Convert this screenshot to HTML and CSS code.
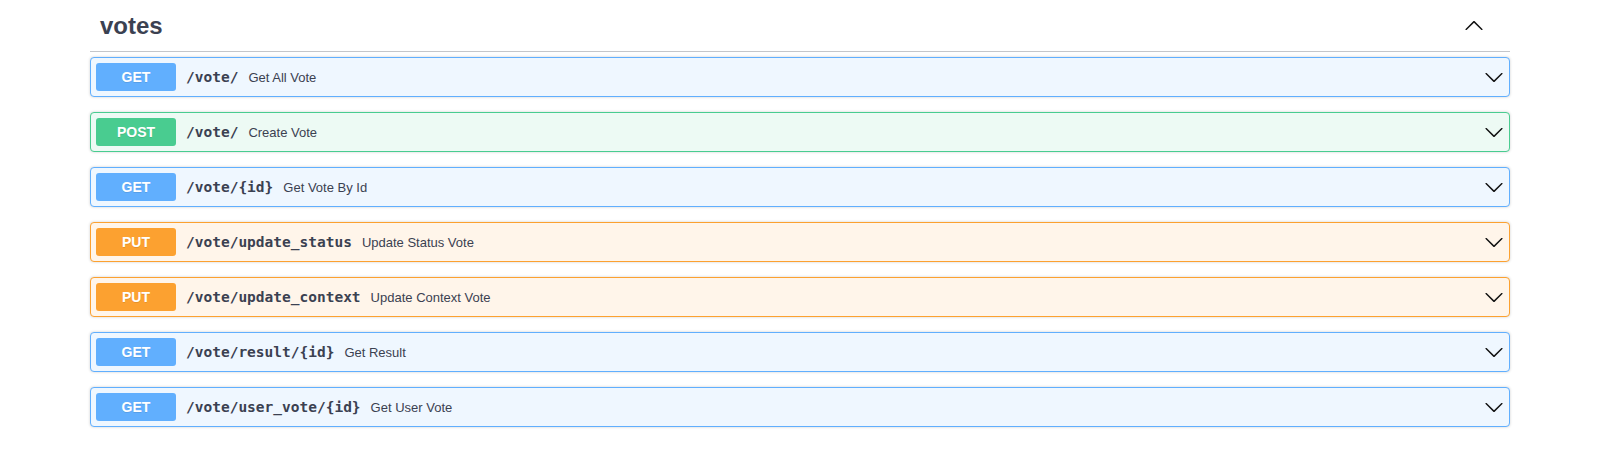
FILE: index.html
```html
<!DOCTYPE html>
<html>
<head>
<meta charset="utf-8">
<link rel="stylesheet" href="styles.css">
</head>
<body>
<div class="wrapper">
  <h3 class="tag">
    <span class="tag-name">votes</span>
    <button class="tag-toggle" aria-label="collapse">
      <svg class="arrow up" width="20" height="20" viewBox="0 0 20 20"><path d="M17.418 6.109c.272-.268.709-.268.979 0s.271.701 0 .969l-7.908 7.83c-.27.268-.707.268-.979 0l-7.908-7.83c-.27-.268-.27-.701 0-.969.271-.268.709-.268.979 0L10 13.25l7.418-7.141z"/></svg>
    </button>
  </h3>

  <div class="opblock get">
    <div class="summary">
      <span class="method">GET</span>
      <span class="path">/vote/</span>
      <span class="desc">Get All Vote</span>
      <svg class="arrow" width="20" height="20" viewBox="0 0 20 20"><path d="M17.418 6.109c.272-.268.709-.268.979 0s.271.701 0 .969l-7.908 7.83c-.27.268-.707.268-.979 0l-7.908-7.83c-.27-.268-.27-.701 0-.969.271-.268.709-.268.979 0L10 13.25l7.418-7.141z"/></svg>
    </div>
  </div>

  <div class="opblock post">
    <div class="summary">
      <span class="method">POST</span>
      <span class="path">/vote/</span>
      <span class="desc">Create Vote</span>
      <svg class="arrow" width="20" height="20" viewBox="0 0 20 20"><path d="M17.418 6.109c.272-.268.709-.268.979 0s.271.701 0 .969l-7.908 7.83c-.27.268-.707.268-.979 0l-7.908-7.83c-.27-.268-.27-.701 0-.969.271-.268.709-.268.979 0L10 13.25l7.418-7.141z"/></svg>
    </div>
  </div>

  <div class="opblock get">
    <div class="summary">
      <span class="method">GET</span>
      <span class="path">/vote/{id}</span>
      <span class="desc">Get Vote By Id</span>
      <svg class="arrow" width="20" height="20" viewBox="0 0 20 20"><path d="M17.418 6.109c.272-.268.709-.268.979 0s.271.701 0 .969l-7.908 7.83c-.27.268-.707.268-.979 0l-7.908-7.83c-.27-.268-.27-.701 0-.969.271-.268.709-.268.979 0L10 13.25l7.418-7.141z"/></svg>
    </div>
  </div>

  <div class="opblock put">
    <div class="summary">
      <span class="method">PUT</span>
      <span class="path">/vote/update_status</span>
      <span class="desc">Update Status Vote</span>
      <svg class="arrow" width="20" height="20" viewBox="0 0 20 20"><path d="M17.418 6.109c.272-.268.709-.268.979 0s.271.701 0 .969l-7.908 7.83c-.27.268-.707.268-.979 0l-7.908-7.83c-.27-.268-.27-.701 0-.969.271-.268.709-.268.979 0L10 13.25l7.418-7.141z"/></svg>
    </div>
  </div>

  <div class="opblock put">
    <div class="summary">
      <span class="method">PUT</span>
      <span class="path">/vote/update_context</span>
      <span class="desc">Update Context Vote</span>
      <svg class="arrow" width="20" height="20" viewBox="0 0 20 20"><path d="M17.418 6.109c.272-.268.709-.268.979 0s.271.701 0 .969l-7.908 7.83c-.27.268-.707.268-.979 0l-7.908-7.83c-.27-.268-.27-.701 0-.969.271-.268.709-.268.979 0L10 13.25l7.418-7.141z"/></svg>
    </div>
  </div>

  <div class="opblock get">
    <div class="summary">
      <span class="method">GET</span>
      <span class="path">/vote/result/{id}</span>
      <span class="desc">Get Result</span>
      <svg class="arrow" width="20" height="20" viewBox="0 0 20 20"><path d="M17.418 6.109c.272-.268.709-.268.979 0s.271.701 0 .969l-7.908 7.83c-.27.268-.707.268-.979 0l-7.908-7.83c-.27-.268-.27-.701 0-.969.271-.268.709-.268.979 0L10 13.25l7.418-7.141z"/></svg>
    </div>
  </div>

  <div class="opblock get">
    <div class="summary">
      <span class="method">GET</span>
      <span class="path">/vote/user_vote/{id}</span>
      <span class="desc">Get User Vote</span>
      <svg class="arrow" width="20" height="20" viewBox="0 0 20 20"><path d="M17.418 6.109c.272-.268.709-.268.979 0s.271.701 0 .969l-7.908 7.83c-.27.268-.707.268-.979 0l-7.908-7.83c-.27-.268-.27-.701 0-.969.271-.268.709-.268.979 0L10 13.25l7.418-7.141z"/></svg>
    </div>
  </div>
</div>
</body>
</html>
```

FILE: styles.css
```css
html, body {
  margin: 0;
  padding: 0;
  background: #ffffff;
}

body {
  font-family: "Liberation Sans", Arial, sans-serif;
  color: #3b4151;
}

.wrapper {
  width: 1420px;
  margin-left: 90px;
}

.tag {
  display: flex;
  align-items: center;
  margin: 0 0 5px;
  padding: 10px 20px 10px 10px;
  border-bottom: 1px solid rgba(59, 65, 81, 0.3);
  font-size: 24px;
  line-height: 31px;
  font-weight: bold;
  color: #3b4151;
}

.tag-name {
  flex: 1;
}

.tag-toggle {
  display: flex;
  align-items: center;
  border: none;
  background: none;
  padding: 0;
  margin-right: 6px;
}

.arrow {
  display: block;
  fill: #111;
}

.arrow.up {
  transform: rotate(180deg);
}

.opblock {
  margin: 0 0 15px;
  border: 1px solid #000;
  border-radius: 4px;
  box-shadow: 0 0 3px rgba(0, 0, 0, 0.19);
}

.opblock.get {
  background: #eff7ff;
  border-color: #61affe;
}

.opblock.post {
  background: #edfaf4;
  border-color: #49cc90;
}

.opblock.put {
  background: #fff5ea;
  border-color: #fca130;
}

.summary {
  display: flex;
  align-items: center;
  padding: 5px;
}

.method {
  min-width: 80px;
  padding: 6px 0;
  border-radius: 3px;
  font-size: 14px;
  line-height: 16px;
  font-weight: bold;
  text-align: center;
  color: #fff;
  text-shadow: 0 1px 0 rgba(0, 0, 0, 0.1);
}

.get .method { background: #61affe; }
.post .method { background: #49cc90; }
.put .method { background: #fca130; }

.path {
  padding: 0 10px;
  font-family: "DejaVu Sans Mono", "Liberation Mono", monospace;
  font-size: 14.5px;
  font-weight: bold;
  color: #3b4151;
}

.desc {
  flex: 1;
  font-size: 13px;
  color: #3b4151;
}
```
